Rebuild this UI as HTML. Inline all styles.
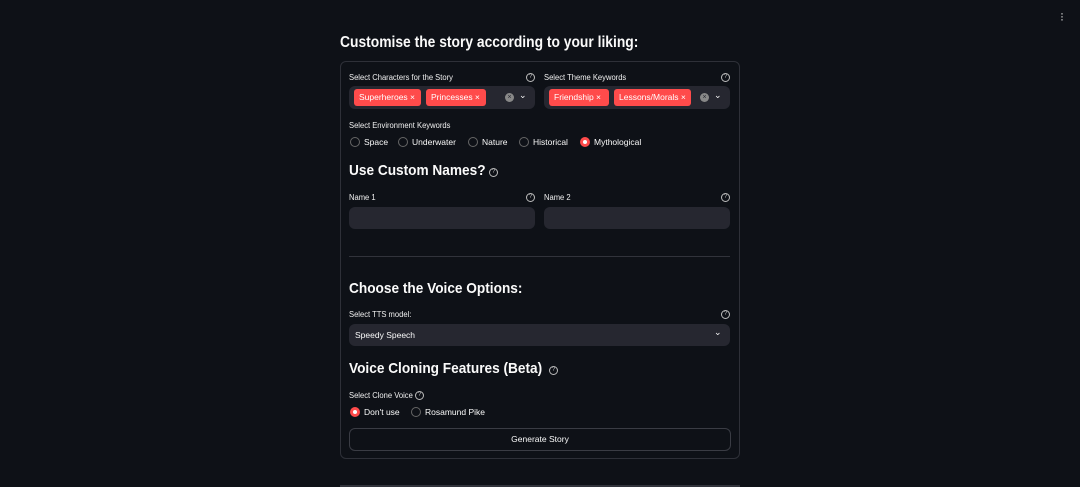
<!DOCTYPE html>
<html><head><style>
body{margin:0;width:1080px;height:487px;background:#0e1117;font-family:"Liberation Sans",sans-serif;color:#fafafa;position:relative;overflow:hidden}
.a{position:absolute;white-space:nowrap}
.lbl{font-size:8px;color:#f0f0f0;transform:scaleX(0.95);transform-origin:left}
.box{position:absolute;background:#262730;border-radius:6px}
.tag{position:absolute;background:#ff4b4b;border-radius:3px;font-size:8.5px;color:#fff;height:17px;line-height:17px;padding-left:5px}
.h{font-weight:bold;font-size:15px;transform:scaleX(0.91);transform-origin:left}
.q{position:absolute;width:7px;height:7px;border:1px solid #bbb;border-radius:50%;font-size:6px;line-height:7px;text-align:center;color:#bbb}
.r{position:absolute;width:8px;height:8px;border:1px solid #666;border-radius:50%}
.rs{position:absolute;width:4px;height:4px;border:3px solid #ff4b4b;border-radius:50%;background:#fff}
.rt{font-size:8.5px}
</style></head><body>
<div class="a" style="right:16px;top:12px;font-size:12px;line-height:3px;color:#ddd;width:4px;text-align:center">·<br>·<br>·</div>
<div class="a" style="left:340px;top:34px;font-size:16px;font-weight:bold;transform:scaleX(0.865);transform-origin:left">Customise the story according to your liking:</div>
<div class="a" style="left:340px;top:61px;width:398px;height:396px;border:1px solid #2e3038;border-radius:6px"></div>

<div class="a lbl" style="left:349px;top:73px">Select Characters for the Story</div>
<div class="q" style="left:526px;top:73px">?</div>
<div class="a lbl" style="left:544px;top:73px">Select Theme Keywords</div>
<div class="q" style="left:721px;top:73px">?</div>
<div class="box" style="left:349px;top:86px;width:186px;height:23px"></div>
<div class="box" style="left:544px;top:86px;width:186px;height:23px"></div>
<div class="tag" style="left:354px;top:89px;width:62px">Superheroes ×</div>
<div class="tag" style="left:426px;top:89px;width:55px">Princesses ×</div>
<div class="tag" style="left:549px;top:89px;width:55px">Friendship ×</div>
<div class="tag" style="left:614px;top:89px;width:72px">Lessons/Morals ×</div>
<div class="a" style="left:505px;top:93px;width:9px;height:9px;border-radius:50%;background:#888;font-size:7px;line-height:9px;text-align:center;color:#262730">×</div>
<div class="a" style="left:700px;top:93px;width:9px;height:9px;border-radius:50%;background:#888;font-size:7px;line-height:9px;text-align:center;color:#262730">×</div>
<div class="a" style="left:519px;top:90px;font-size:9px">⌄</div>
<div class="a" style="left:714px;top:90px;font-size:9px">⌄</div>

<div class="a lbl" style="left:349px;top:121px">Select Environment Keywords</div>
<div class="r" style="left:350px;top:137px"></div><div class="a rt" style="left:364px;top:137px">Space</div>
<div class="r" style="left:398px;top:137px"></div><div class="a rt" style="left:412px;top:137px">Underwater</div>
<div class="r" style="left:468px;top:137px"></div><div class="a rt" style="left:482px;top:137px">Nature</div>
<div class="r" style="left:519px;top:137px"></div><div class="a rt" style="left:533px;top:137px">Historical</div>
<div class="rs" style="left:580px;top:137px"></div><div class="a rt" style="left:594px;top:137px">Mythological</div>

<div class="a h" style="left:349px;top:162px">Use Custom Names?</div>
<div class="q" style="left:489px;top:168px">?</div>
<div class="a lbl" style="left:349px;top:193px">Name 1</div><div class="q" style="left:526px;top:193px">?</div>
<div class="a lbl" style="left:544px;top:193px">Name 2</div><div class="q" style="left:721px;top:193px">?</div>
<div class="box" style="left:349px;top:207px;width:186px;height:22px"></div>
<div class="box" style="left:544px;top:207px;width:186px;height:22px"></div>
<div class="a" style="left:349px;top:256px;width:381px;height:1px;background:#31333b"></div>

<div class="a h" style="left:349px;top:280px">Choose the Voice Options:</div>
<div class="a lbl" style="left:349px;top:310px">Select TTS model:</div><div class="q" style="left:721px;top:310px">?</div>
<div class="box" style="left:349px;top:324px;width:381px;height:22px"></div>
<div class="a rt" style="left:355px;top:330px">Speedy Speech</div>
<div class="a" style="left:714px;top:327px;font-size:9px">⌄</div>

<div class="a h" style="left:349px;top:360px">Voice Cloning Features (Beta)</div>
<div class="q" style="left:549px;top:366px">?</div>
<div class="a lbl" style="left:349px;top:391px">Select Clone Voice</div><div class="q" style="left:415px;top:391px">?</div>
<div class="rs" style="left:350px;top:407px"></div><div class="a rt" style="left:364px;top:407px">Don't use</div>
<div class="r" style="left:411px;top:407px"></div><div class="a rt" style="left:425px;top:407px">Rosamund Pike</div>
<div class="a" style="left:349px;top:428px;width:380px;height:21px;border:1px solid #3a3c44;border-radius:6px;font-size:8.5px;text-align:center;line-height:21px">Generate Story</div>
<div class="a" style="left:340px;top:485px;width:400px;height:2px;background:#31333b"></div>
</body></html>
